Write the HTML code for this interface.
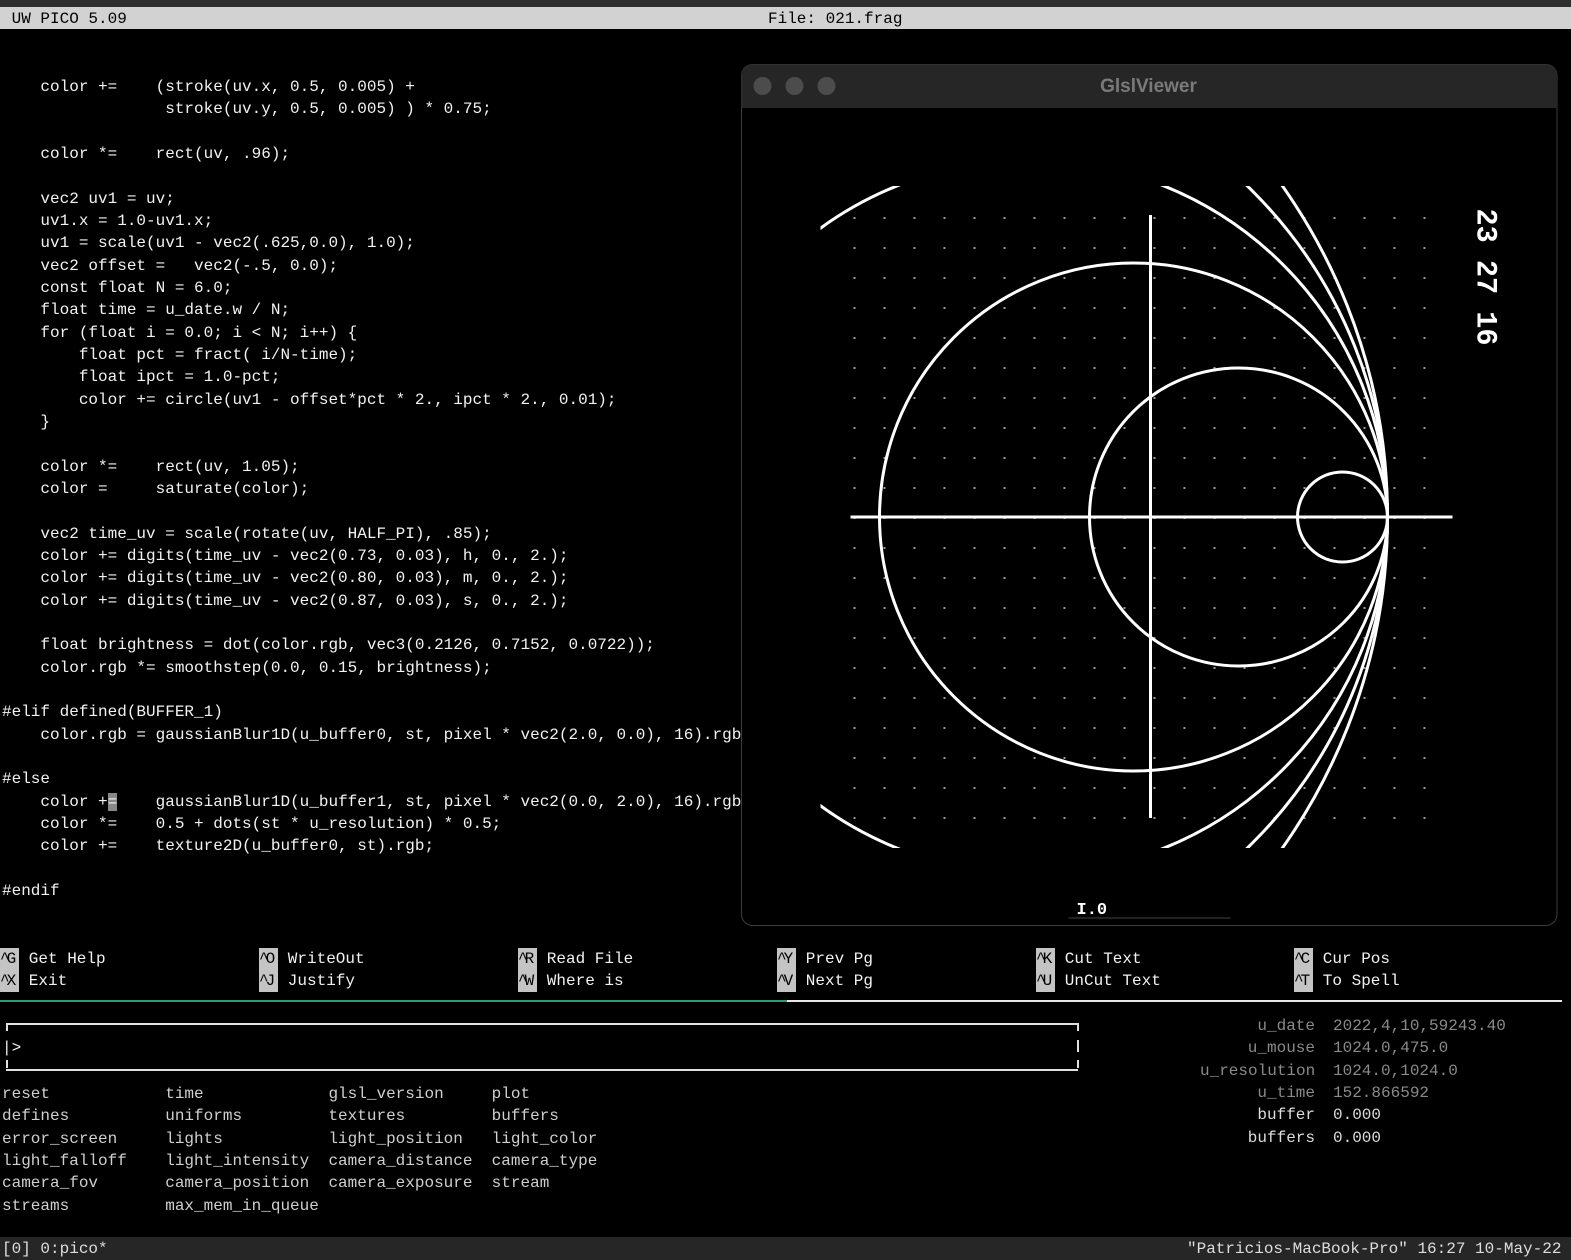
<!DOCTYPE html>
<html><head><meta charset="utf-8"><style>
html,body{margin:0;padding:0;background:#000;width:1571px;height:1260px;overflow:hidden;position:relative;font-family:"Liberation Mono",monospace;font-size:16px;}
.r{position:absolute;left:0;white-space:pre;height:22.33px;line-height:22.33px;color:#f2f2f2;}
.k{background:#c4c4c4;color:#000;display:inline-block;width:19.2px;letter-spacing:-3px;}
.g{color:#cfcfcf}
.d{color:#8a8a8a}
</style></head><body>
<div style="position:absolute;left:0;top:0;width:1571px;height:7px;background:#2e2e2e"></div>
<div style="position:absolute;left:0;top:7px;width:1571px;height:22px;background:#d2d2d2"></div>
<div class="r" style="top:7.5px;color:#000;left:2px"> UW PICO 5.09</div>
<div class="r" style="top:7.5px;color:#000;left:768px">File: 021.frag</div>
<pre style="position:absolute;left:2px;top:76px;margin:0;font-family:inherit;font-size:16px;line-height:22.33px;color:#f2f2f2">    color +=    (stroke(uv.x, 0.5, 0.005) +
                 stroke(uv.y, 0.5, 0.005) ) * 0.75;

    color *=    rect(uv, .96);

    vec2 uv1 = uv;
    uv1.x = 1.0-uv1.x;
    uv1 = scale(uv1 - vec2(.625,0.0), 1.0);
    vec2 offset =   vec2(-.5, 0.0);
    const float N = 6.0;
    float time = u_date.w / N;
    for (float i = 0.0; i &lt; N; i++) {
        float pct = fract( i/N-time);
        float ipct = 1.0-pct;
        color += circle(uv1 - offset*pct * 2., ipct * 2., 0.01);
    }

    color *=    rect(uv, 1.05);
    color =     saturate(color);

    vec2 time_uv = scale(rotate(uv, HALF_PI), .85);
    color += digits(time_uv - vec2(0.73, 0.03), h, 0., 2.);
    color += digits(time_uv - vec2(0.80, 0.03), m, 0., 2.);
    color += digits(time_uv - vec2(0.87, 0.03), s, 0., 2.);

    float brightness = dot(color.rgb, vec3(0.2126, 0.7152, 0.0722));
    color.rgb *= smoothstep(0.0, 0.15, brightness);

#elif defined(BUFFER_1)
    color.rgb = gaussianBlur1D(u_buffer0, st, pixel * vec2(2.0, 0.0), 16).rgb

#else
    color +<span style="background:#888">=</span>    gaussianBlur1D(u_buffer1, st, pixel * vec2(0.0, 2.0), 16).rgb
    color *=    0.5 + dots(st * u_resolution) * 0.5;
    color +=    texture2D(u_buffer0, st).rgb;

#endif</pre>

<svg style="position:absolute;left:738px;top:64px" width="822" height="862" viewBox="735.5 64 822 862">
<defs>
<pattern id="dots" x="851" y="217" width="30" height="30" patternUnits="userSpaceOnUse"><rect x="0" y="0" width="2" height="2" fill="#9a9a9a"/></pattern>
<clipPath id="cl"><rect x="818" y="186" width="632" height="662"/></clipPath>
</defs>
<rect x="739" y="64.5" width="815.5" height="861" rx="11" fill="#000" stroke="#3c3c3c"/>
<path d="M739 108 V75.5 a11 11 0 0 1 11 -11 H1543.5 a11 11 0 0 1 11 11 V108 Z" fill="#262626"/>
<circle cx="760" cy="86" r="9" fill="#4c4c4c"/><circle cx="792" cy="86" r="9" fill="#4c4c4c"/><circle cx="824" cy="86" r="9" fill="#4c4c4c"/>
<text x="1146" y="92" text-anchor="middle" font-family="Liberation Sans,sans-serif" font-weight="bold" font-size="19" fill="#7a7a7a">GlslViewer</text>
<rect x="848" y="210" width="585" height="620" fill="url(#dots)"/>
<g clip-path="url(#cl)" fill="none" stroke="#fff" stroke-width="3">
<circle cx="1340" cy="517" r="45"/>
<circle cx="1236" cy="517" r="149"/>
<circle cx="1131" cy="517" r="254"/>
<circle cx="1028" cy="517" r="357"/>
<circle cx="924" cy="517" r="461"/>
<circle cx="811" cy="517" r="574"/>
</g>
<line x1="848" y1="517" x2="1450" y2="517" stroke="#fff" stroke-width="3"/>
<line x1="1148" y1="215" x2="1148" y2="818" stroke="#fff" stroke-width="3"/>
<text transform="translate(1475,277) rotate(90)" text-anchor="middle" font-family="Liberation Mono,monospace" font-weight="bold" font-size="30" fill="#fff" textLength="137" lengthAdjust="spacingAndGlyphs">23 27 16</text>
<text x="1074" y="914" font-family="Liberation Mono,monospace" font-weight="bold" font-size="17" fill="#fff">I.0</text>
<line x1="1066" y1="918" x2="1228" y2="918" stroke="#444" stroke-width="1"/>
</svg>

<div class="r" style="top:947.5px"><span class="k">^G</span> Get Help</div>
<div class="r" style="top:947.5px;left:259px"><span class="k">^O</span> WriteOut</div>
<div class="r" style="top:947.5px;left:518px"><span class="k">^R</span> Read File</div>
<div class="r" style="top:947.5px;left:777px"><span class="k">^Y</span> Prev Pg</div>
<div class="r" style="top:947.5px;left:1036px"><span class="k">^K</span> Cut Text</div>
<div class="r" style="top:947.5px;left:1294px"><span class="k">^C</span> Cur Pos</div>
<div class="r" style="top:969.8px"><span class="k">^X</span> Exit</div>
<div class="r" style="top:969.8px;left:259px"><span class="k">^J</span> Justify</div>
<div class="r" style="top:969.8px;left:518px"><span class="k">^W</span> Where is</div>
<div class="r" style="top:969.8px;left:777px"><span class="k">^V</span> Next Pg</div>
<div class="r" style="top:969.8px;left:1036px"><span class="k">^U</span> UnCut Text</div>
<div class="r" style="top:969.8px;left:1294px"><span class="k">^T</span> To Spell</div>

<div style="position:absolute;left:0;top:1000px;width:787px;height:2px;background:#2f9a78"></div>
<div style="position:absolute;left:787px;top:1000px;width:775px;height:2px;background:#e8e8e8"></div>

<div style="position:absolute;left:6px;top:1023px;width:1072px;height:44px;border:2px solid #e0e0e0;border-left:none;border-right:none"></div>
<div style="position:absolute;left:6px;top:1023px;width:2px;height:8px;background:#e0e0e0"></div>
<div style="position:absolute;left:6px;top:1060px;width:2px;height:8px;background:#e0e0e0"></div>
<div style="position:absolute;left:1077px;top:1023px;width:2px;height:8px;background:#e0e0e0"></div>
<div style="position:absolute;left:1077px;top:1040px;width:2px;height:12px;background:#e0e0e0"></div>
<div style="position:absolute;left:1077px;top:1060px;width:2px;height:8px;background:#e0e0e0"></div>
<div class="r" style="top:1037px;left:2px">|&gt;</div>

<pre class="g" style="position:absolute;left:2px;top:1083px;margin:0;font-family:inherit;font-size:16px;line-height:22.33px">reset            time             glsl_version     plot
defines          uniforms         textures         buffers
error_screen     lights           light_position   light_color
light_falloff    light_intensity  camera_distance  camera_type
camera_fov       camera_position  camera_exposure  stream
streams          max_mem_in_queue</pre>

<pre style="position:absolute;left:1200px;top:1015px;margin:0;font-family:inherit;font-size:16px;line-height:22.33px;text-align:right;width:115px;color:#8a8a8a">u_date
u_mouse
u_resolution
u_time
<span style="color:#ddd">buffer</span>
<span style="color:#ddd">buffers</span></pre>
<pre style="position:absolute;left:1333px;top:1015px;margin:0;font-family:inherit;font-size:16px;line-height:22.33px;color:#8a8a8a">2022,4,10,59243.40
1024.0,475.0
1024.0,1024.0
152.866592
<span style="color:#ddd">0.000</span>
<span style="color:#ddd">0.000</span></pre>

<div style="position:absolute;left:0;top:1237px;width:1571px;height:23px;background:#262626"></div>
<div class="r" style="top:1238px;left:2px;color:#ddd">[0] 0:pico*</div>
<div class="r" style="top:1238px;left:1187px;color:#ddd">"Patricios-MacBook-Pro" 16:27 10-May-22</div>
</body></html>
